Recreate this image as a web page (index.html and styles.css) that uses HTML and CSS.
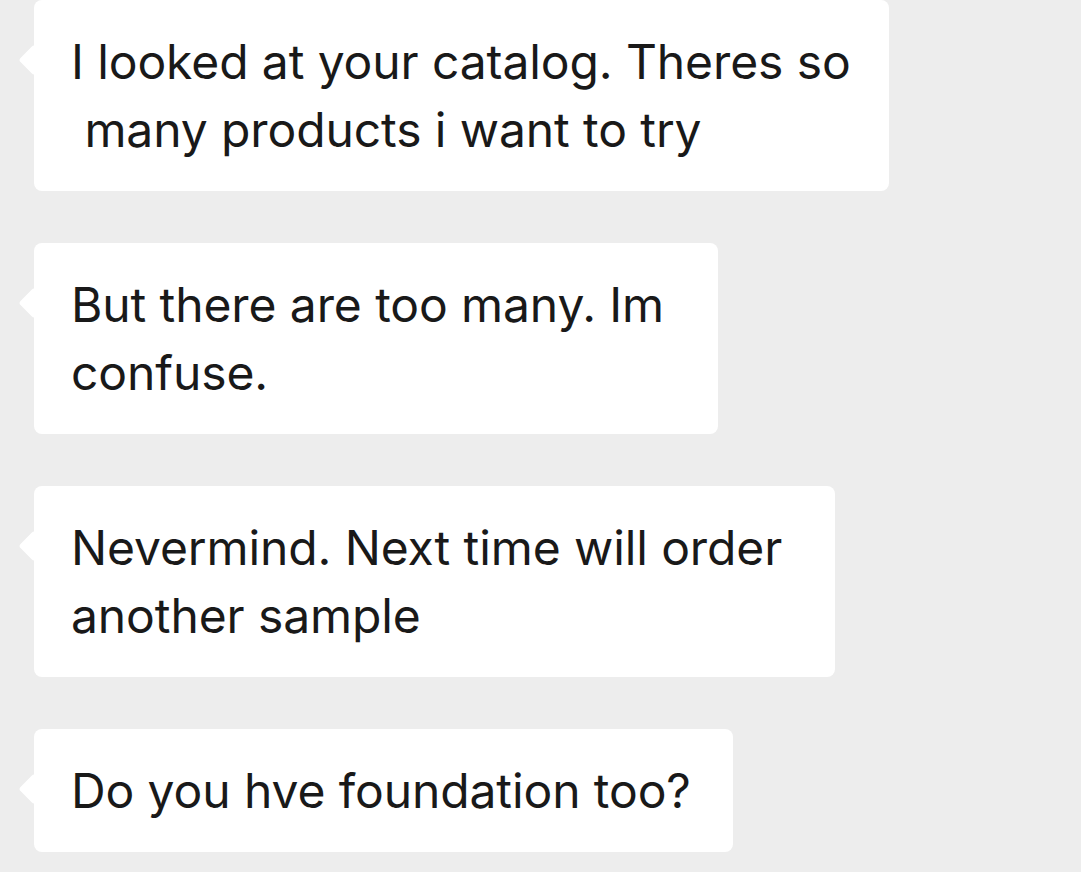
FILE: index.html
```html
<!DOCTYPE html>
<html lang="en">
<head>
<meta charset="utf-8">
<title>Chat</title>
<link rel="stylesheet" href="styles.css">
</head>
<body>
<div class="chat">
  <div class="bubble b1">I looked at your catalog. Theres so<br>&nbsp;many products i want to try</div>
  <div class="bubble b2">But there are too many. Im<br>confuse.</div>
  <div class="bubble b3">Nevermind. Next time will order<br>another sample</div>
  <div class="bubble b4">Do you hve foundation too?</div>
</div>
</body>
</html>
```
FILE: styles.css
```css
html, body {
  margin: 0;
  padding: 0;
  background: #ededed;
}
body {
  width: 1081px;
  height: 872px;
  overflow: hidden;
  font-family: Inter, "Noto Sans", sans-serif;
  color: #191919;
}
.chat {
  display: flex;
  flex-direction: column;
  align-items: flex-start;
  gap: 52px;
  padding-left: 34px;
}
.bubble {
  position: relative;
  box-sizing: border-box;
  background: #ffffff;
  border-radius: 8px;
  padding: 27.5px 38px 27.5px 37px;
  font-size: 48px;
  line-height: 68px;
  letter-spacing: -0.1px;
  white-space: nowrap;
}
.bubble::before {
  content: "";
  position: absolute;
  left: -11px;
  top: 49px;
  width: 22px;
  height: 22px;
  background: #ffffff;
  border-radius: 3px;
  transform: rotate(45deg);
}
.b1 { width: 855px; }
.b2 { width: 684px; }
.b3 { width: 801px; }
.b4 { width: 699px; }
```
